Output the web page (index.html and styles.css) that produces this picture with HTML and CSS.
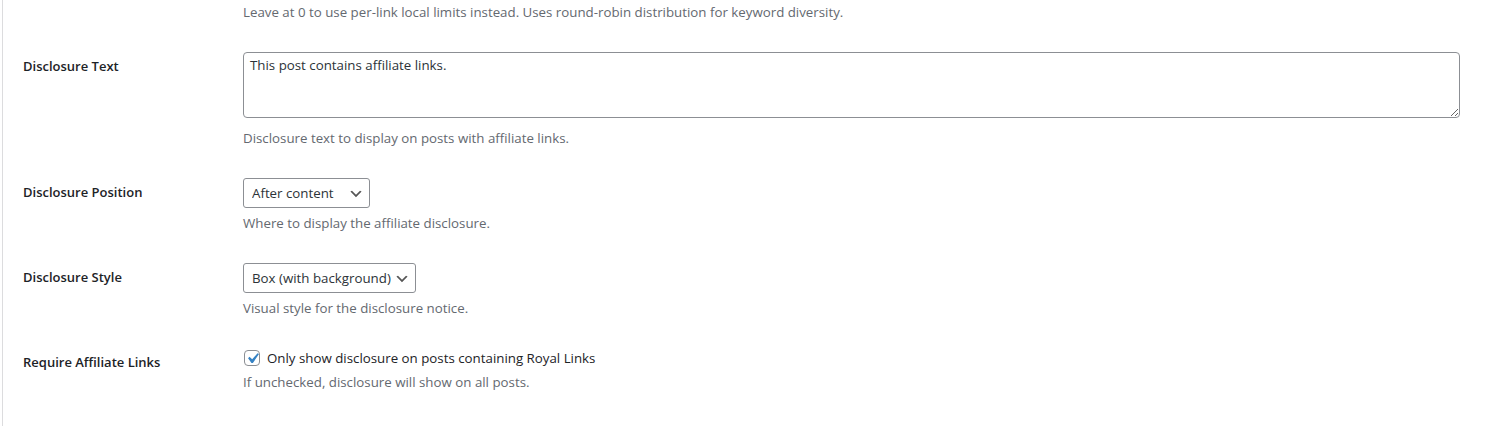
FILE: index.html
```html
<!DOCTYPE html>
<html>
<head>
  <title>Disclosure Settings</title>
  <link rel="stylesheet" href="styles.css">
</head>
<body>
  <div class="wrap">
    <div class="form-table">

      <div class="row row-first">
        <div class="row-label"></div>
        <div class="row-field">
          <p class="description">Leave at 0 to use per-link local limits instead. Uses round-robin distribution for keyword diversity.</p>
        </div>
      </div>

      <div class="row">
        <div class="row-label"><label for="disclosure_text">Disclosure Text</label></div>
        <div class="row-field">
          <textarea id="disclosure_text" class="large-text" rows="3">This post contains affiliate links.</textarea>
          <p class="description">Disclosure text to display on posts with affiliate links.</p>
        </div>
      </div>

      <div class="row">
        <div class="row-label"><label for="disclosure_position">Disclosure Position</label></div>
        <div class="row-field">
          <select id="disclosure_position" class="select">
            <option>After content</option>
            <option>Before content</option>
            <option>Both</option>
          </select>
          <p class="description">Where to display the affiliate disclosure.</p>
        </div>
      </div>

      <div class="row">
        <div class="row-label"><label for="disclosure_style">Disclosure Style</label></div>
        <div class="row-field">
          <select id="disclosure_style" class="select">
            <option>Box (with background)</option>
            <option>Plain text</option>
          </select>
          <p class="description">Visual style for the disclosure notice.</p>
        </div>
      </div>

      <div class="row">
        <div class="row-label"><label>Require Affiliate Links</label></div>
        <div class="row-field">
          <label class="check">
            <span class="check-box">
              <svg viewBox="0 0 20 20"><path d="M14.83 4.89l1.34.94-5.81 8.38H9.02L5.78 9.67l1.34-1.25 2.57 2.4z" fill="#3582c4"/></svg>
            </span>
            Only show disclosure on posts containing Royal Links
          </label>
          <p class="description">If unchecked, disclosure will show on all posts.</p>
        </div>
      </div>

    </div>
  </div>
</body>
</html>
```

FILE: styles.css
```css
html, body {
  margin: 0;
  padding: 0;
  height: 100%;
}

body {
  background-color: #fff;
  color: #1d2327;
  font-family: "Open Sans", "Noto Sans", sans-serif;
  font-size: 13.3px;
}

.wrap {
  margin-left: 2px;
  min-height: 100%;
  border-left: 1px solid #dcdcde;
  padding: 0 28px 0 20px;
  box-sizing: border-box;
}

.row {
  display: grid;
  grid-template-columns: 210px 1fr;
}

.row-label {
  padding: 20px 10px 20px 0;
  font-size: 13px;
  font-weight: 600;
  line-height: 18px;
}

.row-field {
  padding: 15px 10px;
  line-height: 18px;
}

.row-first .row-label {
  padding: 0;
}

.row-first .row-field {
  padding-top: 2px;
}

.description {
  margin: 5px 0 0;
  font-size: 13.3px;
  line-height: 20px;
  color: #646970;
}

.row-first .description {
  margin-top: 0;
}

.large-text + .description {
  margin-top: 10px;
}

.check + .description {
  margin-top: 6px;
}

.large-text {
  display: block;
  width: 100%;
  box-sizing: border-box;
  height: 66px;
  padding: 2px 6px;
  border: 1px solid #8c8f94;
  border-radius: 4px;
  font-family: inherit;
  font-size: 13.3px;
  line-height: 20px;
  color: #2c3338;
  resize: vertical;
}

.select {
  display: block;
  height: 30px;
  padding: 0 24px 0 8px;
  border: 1px solid #8c8f94;
  border-radius: 3px;
  font-family: inherit;
  font-size: 13.3px;
  color: #2c3338;
  background: #fff url("data:image/svg+xml,%3Csvg xmlns='http://www.w3.org/2000/svg' width='20' height='20' viewBox='0 0 20 20'%3E%3Cpath d='M5 6l5 5 5-5 2 1-7 7-7-7 2-1z' fill='%23555'/%3E%3C/svg%3E") no-repeat right 5px top 55%;
  background-size: 16px 16px;
  appearance: none;
  -webkit-appearance: none;
}

.check {
  display: flex;
  align-items: center;
  gap: 7px;
  height: 18px;
  margin-top: 1px;
}

.check-box {
  display: inline-flex;
  align-items: center;
  justify-content: center;
  width: 16px;
  height: 16px;
  box-sizing: border-box;
  border: 1px solid #8c8f94;
  border-radius: 4px;
  margin-left: 1px;
}

.check-box svg {
  width: 21px;
  height: 21px;
  flex: none;
}

.check + .description {
  margin-top: 5px;
}
```
